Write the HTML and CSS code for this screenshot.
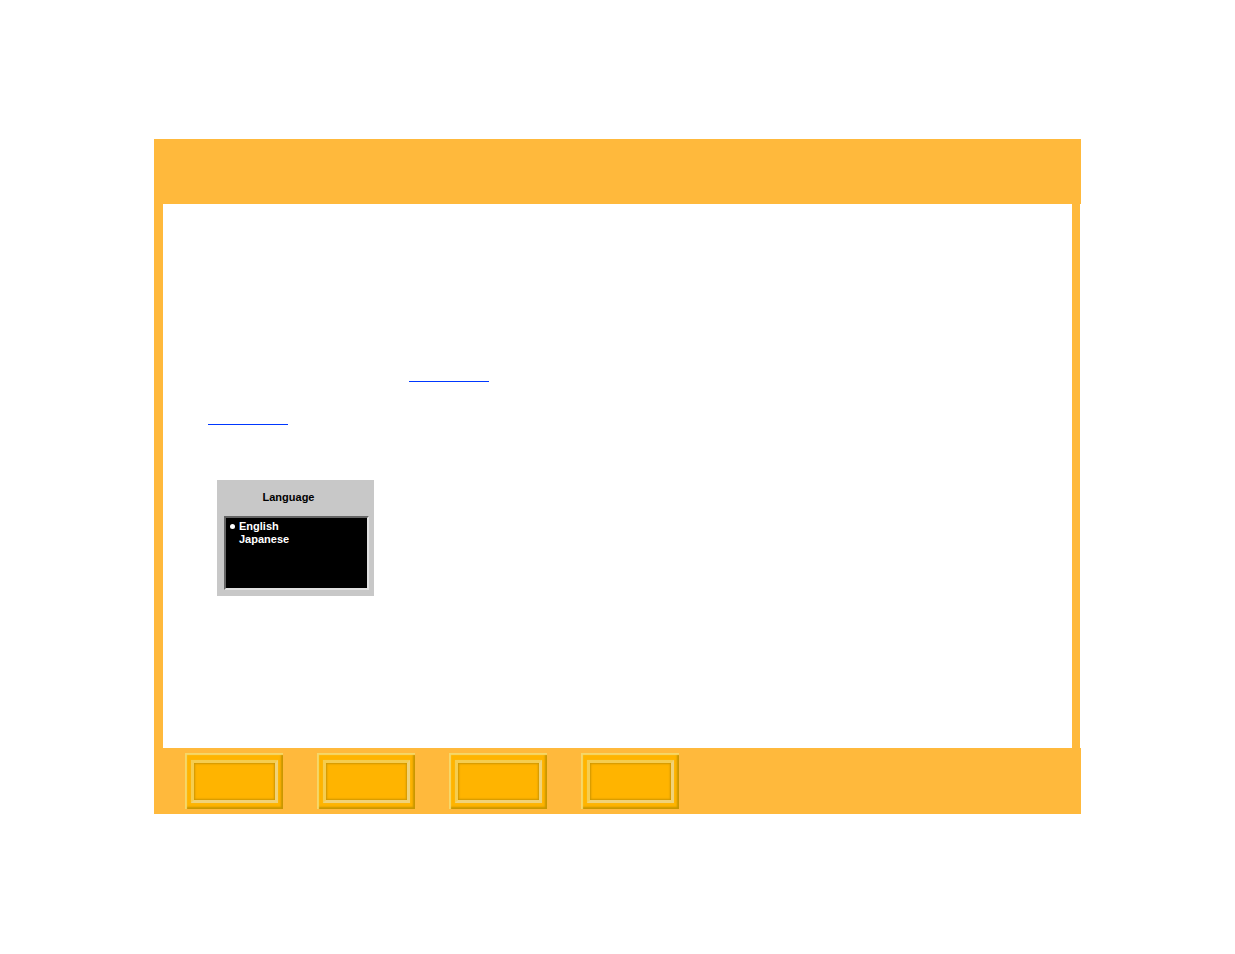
FILE: index.html
```
<!DOCTYPE html>
<html lang="en">
<head>
    <meta charset="UTF-8">
    <title>Language</title>
    <link rel="stylesheet" href="styles.css">
</head>
<body>
    <div class="frame">
        <header class="topbar"></header>
        <main class="content">
            <div class="links">
                <a class="link link-end" href="#language" aria-label="Language"></a>
                <a class="link" href="#language" aria-label="Language"></a>
            </div>
            <form id="language" class="panel">
                <h1 class="title">Language</h1>
                <div class="list">
                    <label class="option">
                        <input type="radio" name="language" value="en" checked>
                        <span>English</span>
                    </label>
                    <label class="option">
                        <input type="radio" name="language" value="ja">
                        <span>Japanese</span>
                    </label>
                </div>
            </form>
        </main>
        <nav class="bottombar">
            <button type="button" class="key" aria-label="Key 1"><span class="face"></span></button>
            <button type="button" class="key" aria-label="Key 2"><span class="face"></span></button>
            <button type="button" class="key" aria-label="Key 3"><span class="face"></span></button>
            <button type="button" class="key" aria-label="Key 4"><span class="face"></span></button>
        </nav>
    </div>
</body>
</html>
```
FILE: styles.css
```
* {
    box-sizing: border-box;
}
body {
    margin: 0;
    padding: 139px 154px;
    background-color: white;
    font-family: "Liberation Sans", Arial, sans-serif;
}
.topbar {
    height: 65px;
    background-color: #ffb93c;
}
.content {
    min-height: 544px;
    margin-right: 1px;
    padding: 177px 45px 60px;
    border-left: 9px solid #ffb93c;
    border-right: 8px solid #ffb93c;
    background-color: white;
}
.links {
    display: flex;
    flex-direction: column;
    align-items: flex-start;
    gap: 42px;
    margin-bottom: 55px;
}
.link {
    display: block;
    width: 80px;
    border-bottom: 1px solid #0037ff;
}
.link-end {
    margin-left: 201px;
}
.panel {
    width: 157px;
    margin-left: 9px;
    padding: 10px 5px 6px 7px;
    background-color: #c8c8c8;
}
.title {
    margin: 0;
    padding: 0 16px 11px 0;
    color: black;
    font-size: 11px;
    line-height: 15px;
    text-align: center;
}
.list {
    height: 74px;
    padding: 2px 4px;
    border: 2px solid;
    border-color: #646464 #e1e1e1 #e1e1e1 #646464;
    background-color: black;
}
.option {
    display: flex;
    align-items: center;
    gap: 4px;
    color: white;
    font-size: 11px;
    font-weight: bold;
    line-height: 13px;
}
.option input {
    appearance: none;
    width: 5px;
    height: 5px;
    margin: 0;
    border-radius: 50%;
}
.option input:checked {
    background-color: white;
}
.bottombar {
    display: flex;
    align-items: flex-start;
    gap: 34px;
    min-height: 66px;
    padding: 5px 31px;
    background-color: #ffb93c;
}
.key {
    display: flex;
    width: 98px;
    height: 56px;
    padding: 7px 5px 6px 6px;
    border: 0;
    background-color: #ffb400;
    box-shadow: inset 2px 2px 1px #f5d769, inset -2px -2px 2px #c89600;
    cursor: pointer;
}
/* raised rim around the sunken middle */
.face {
    flex: 1;
    border: 3px solid;
    border-color: #f5cd50 #f0d278 #f0d278 #f5cd50;
    background-color: #ffb400;
    box-shadow: 0 0 1px #f0be32, inset 0 0 2px 1px #cd9600;
}
```
